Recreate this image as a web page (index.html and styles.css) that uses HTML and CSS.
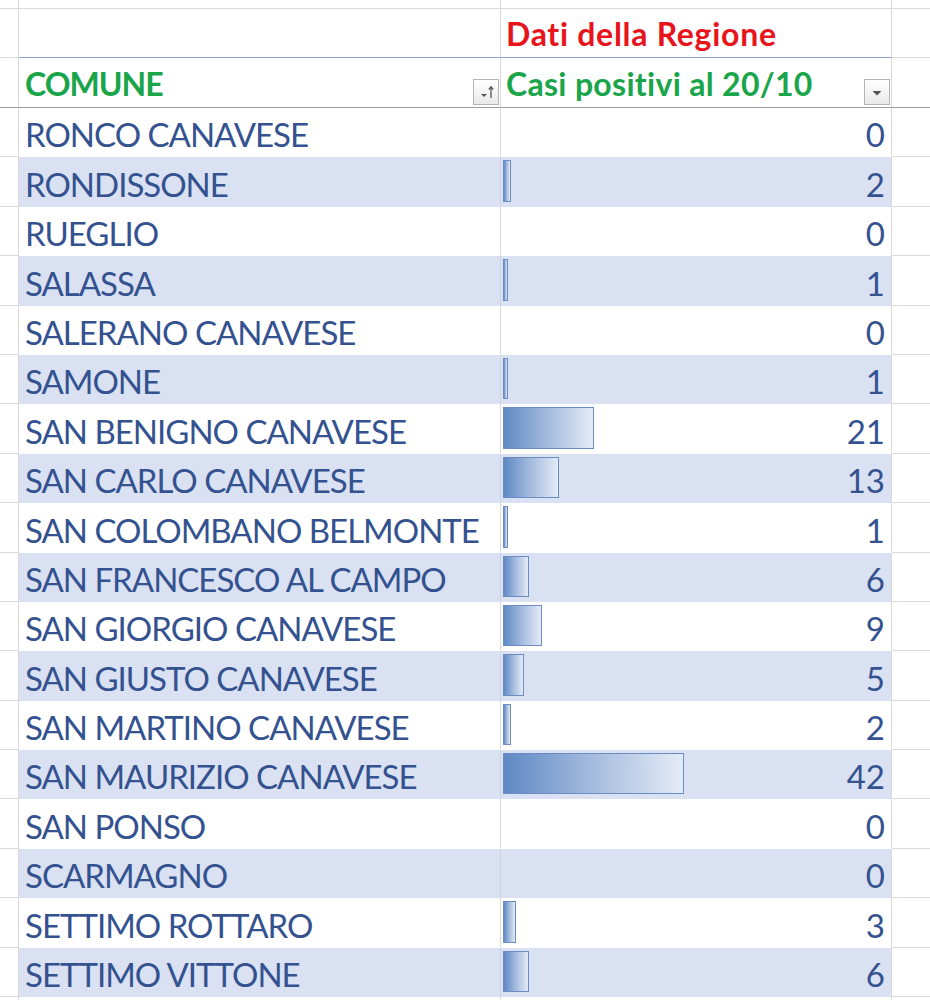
FILE: index.html
```html
<!DOCTYPE html>
<html lang="it">
<head>
<meta charset="utf-8">
<title>Dati della Regione</title>
<link rel="stylesheet" href="styles.css">
</head>
<body>
<div class="sheet">
  <div class="row row-top"><div class="c a"></div><div class="c b"></div><div class="c cc"></div><div class="c d"></div></div>
  <div class="row row-title"><div class="c a"></div><div class="c b"></div><div class="c cc"><span class="title">Dati della Regione</span></div><div class="c d"></div></div>
  <div class="row row-head">
    <div class="c a"></div>
    <div class="c b"><span class="head head-comune">COMUNE</span>
      <span class="fbtn"><svg width="24" height="24" viewBox="0 0 24 24"><path d="M7 14h6l-3 3z" fill="#555"/><path d="M17 7v11" stroke="#555" stroke-width="1.3"/><path d="M14.8 9.5L17 6.8l2.2 2.7" fill="none" stroke="#555" stroke-width="1.3"/></svg></span>
    </div>
    <div class="c cc"><span class="head head-casi">Casi positivi al 20/10</span>
      <span class="fbtn"><svg width="24" height="24" viewBox="0 0 24 24"><path d="M7.5 11h9l-4.5 4.5z" fill="#555"/></svg></span>
    </div>
    <div class="c d"></div>
  </div>
  <div class="row data"><div class="c a"></div><div class="c b">RONCO CANAVESE</div><div class="c cc"><span class="num">0</span></div><div class="c d"></div></div>
  <div class="row data alt"><div class="c a"></div><div class="c b">RONDISSONE</div><div class="c cc"><span class="bar" style="width:8px"></span><span class="num">2</span></div><div class="c d"></div></div>
  <div class="row data"><div class="c a"></div><div class="c b">RUEGLIO</div><div class="c cc"><span class="num">0</span></div><div class="c d"></div></div>
  <div class="row data alt"><div class="c a"></div><div class="c b">SALASSA</div><div class="c cc"><span class="bar" style="width:5px"></span><span class="num">1</span></div><div class="c d"></div></div>
  <div class="row data"><div class="c a"></div><div class="c b">SALERANO CANAVESE</div><div class="c cc"><span class="num">0</span></div><div class="c d"></div></div>
  <div class="row data alt"><div class="c a"></div><div class="c b">SAMONE</div><div class="c cc"><span class="bar" style="width:5px"></span><span class="num">1</span></div><div class="c d"></div></div>
  <div class="row data"><div class="c a"></div><div class="c b">SAN BENIGNO CANAVESE</div><div class="c cc"><span class="bar" style="width:91px"></span><span class="num">21</span></div><div class="c d"></div></div>
  <div class="row data alt"><div class="c a"></div><div class="c b">SAN CARLO CANAVESE</div><div class="c cc"><span class="bar" style="width:56px"></span><span class="num">13</span></div><div class="c d"></div></div>
  <div class="row data"><div class="c a"></div><div class="c b">SAN COLOMBANO BELMONTE</div><div class="c cc"><span class="bar" style="width:5px"></span><span class="num">1</span></div><div class="c d"></div></div>
  <div class="row data alt"><div class="c a"></div><div class="c b">SAN FRANCESCO AL CAMPO</div><div class="c cc"><span class="bar" style="width:26px"></span><span class="num">6</span></div><div class="c d"></div></div>
  <div class="row data"><div class="c a"></div><div class="c b">SAN GIORGIO CANAVESE</div><div class="c cc"><span class="bar" style="width:39px"></span><span class="num">9</span></div><div class="c d"></div></div>
  <div class="row data alt"><div class="c a"></div><div class="c b">SAN GIUSTO CANAVESE</div><div class="c cc"><span class="bar" style="width:21px"></span><span class="num">5</span></div><div class="c d"></div></div>
  <div class="row data"><div class="c a"></div><div class="c b">SAN MARTINO CANAVESE</div><div class="c cc"><span class="bar" style="width:8px"></span><span class="num">2</span></div><div class="c d"></div></div>
  <div class="row data alt"><div class="c a"></div><div class="c b">SAN MAURIZIO CANAVESE</div><div class="c cc"><span class="bar" style="width:181px"></span><span class="num">42</span></div><div class="c d"></div></div>
  <div class="row data"><div class="c a"></div><div class="c b">SAN PONSO</div><div class="c cc"><span class="num">0</span></div><div class="c d"></div></div>
  <div class="row data alt"><div class="c a"></div><div class="c b">SCARMAGNO</div><div class="c cc"><span class="num">0</span></div><div class="c d"></div></div>
  <div class="row data"><div class="c a"></div><div class="c b">SETTIMO ROTTARO</div><div class="c cc"><span class="bar" style="width:13px"></span><span class="num">3</span></div><div class="c d"></div></div>
  <div class="row data alt"><div class="c a"></div><div class="c b">SETTIMO VITTONE</div><div class="c cc"><span class="bar" style="width:26px"></span><span class="num">6</span></div><div class="c d"></div></div>
  <div class="row data"><div class="c a"></div><div class="c b"></div><div class="c cc"></div><div class="c d"></div></div>
</div>
</body>
</html>
```

FILE: styles.css
```css
html, body {
  margin: 0;
  padding: 0;
  background: #ffffff;
  overflow: hidden;
}
.sheet {
  width: 930px;
  height: 1000px;
  overflow: hidden;
  font-family: Lato, "Open Sans", sans-serif;
}
.row {
  display: grid;
  grid-template-columns: 19px 482px 391px 1fr;
  height: 49.4px;
}
.c {
  box-sizing: border-box;
  border-right: 1px solid #d9d9d9;
  border-bottom: 1px solid #d9d9d9;
  display: flex;
  align-items: flex-end;
  position: relative;
  min-width: 0;
}
.d { border-right: none; }
.row-top { height: 9px; }
.row-title { height: 49px; }
.row-head { height: 50px; }
.row-title .b, .row-title .cc { border-bottom-color: #8aa2cf; }
.row-head .c { border-bottom: 1px solid #9a9a9a; }
.title {
  color: #e8141c;
  font-weight: 700;
  font-size: 32px;
  letter-spacing: 0.7px;
  line-height: 1;
  padding: 0 0 7px 5px;
}
.head {
  color: #1aa54b;
  font-weight: 700;
  font-size: 32px;
  line-height: 1;
  padding: 0 0 7px 6px;
}
.head-comune { letter-spacing: -1px; }
.head-casi { letter-spacing: 0.3px; padding-left: 5px; }
.fbtn {
  position: absolute;
  right: 1px;
  bottom: 2px;
  width: 26px;
  height: 26px;
  box-sizing: border-box;
  border: 1px solid #b4b4b4;
  background: linear-gradient(#ffffff, #e9e9e9);
  display: flex;
  align-items: center;
  justify-content: center;
}
.data .b {
  color: #34528f;
  font-size: 33px;
  letter-spacing: -1px;
  line-height: 1;
  padding: 0 0 5px 6px;
  white-space: nowrap;
  border-bottom-color: #ffffff;
}
.data .cc {
  border-bottom-color: #ffffff;
  justify-content: flex-end;
  padding: 0 6px 5px 0;
}
.alt .b, .alt .cc {
  background: #d9e1f2;
  border-bottom-color: #d9e1f2;
}
.alt .b { border-right-color: #cfd3da; }
.num {
  color: #34528f;
  font-size: 33px;
  line-height: 1;
}
.bar {
  position: absolute;
  left: 2px;
  top: 3px;
  bottom: 4px;
  box-sizing: border-box;
  border: 1px solid #6b8cc4;
  background: linear-gradient(90deg, #5f89c4 0%, #9fb7dc 45%, #e4ebf6 100%);
}
```
